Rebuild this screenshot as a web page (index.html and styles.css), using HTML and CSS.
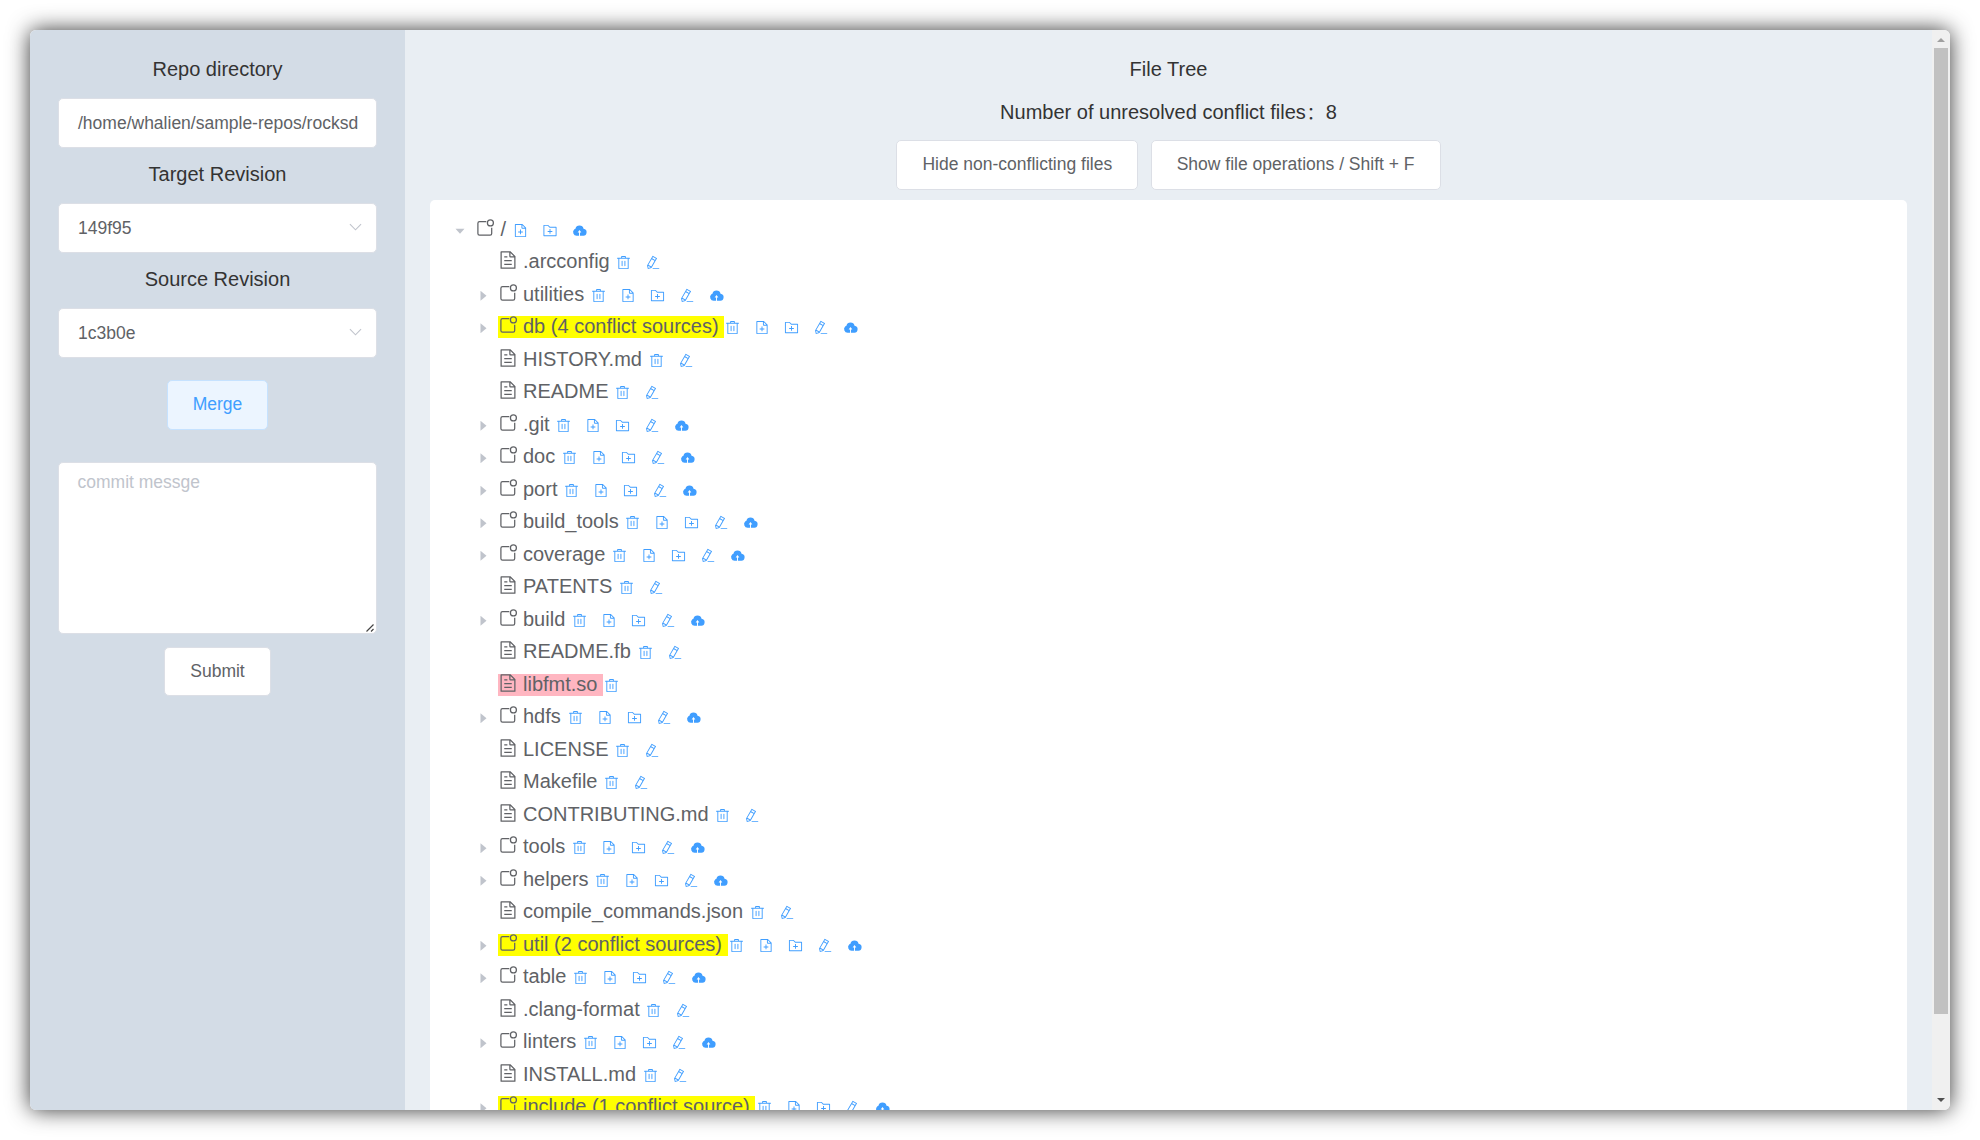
FILE: index.html
```html
<!DOCTYPE html>
<html lang="en">
<head>
<meta charset="utf-8">
<title>File Tree</title>
<link rel="stylesheet" href="styles.css">
</head>
<body>
<svg class="sprite" aria-hidden="true">
  <defs>
    <symbol id="trash" viewBox="0 0 1024 1024"><path d="M160 256H96a32 32 0 010-64h256V95.936a32 32 0 0132-32h256a32 32 0 0132 32V192h256a32 32 0 110 64h-64v672a32 32 0 01-32 32H192a32 32 0 01-32-32V256zm448-64v-64H416v64h192zM224 896h576V256H224v640zm192-128a32 32 0 01-32-32V416a32 32 0 0164 0v320a32 32 0 01-32 32zm192 0a32 32 0 01-32-32V416a32 32 0 0164 0v320a32 32 0 01-32 32z"/></symbol>
    <symbol id="doc-add" viewBox="0 0 1024 1024"><path d="M832 384H640a64 64 0 01-64-64V128H192v768h640V384zm-26.500-64L640 154.500V320h165.500zM160 64h480l256 256v608a32 32 0 01-32 32H160a32 32 0 01-32-32V96a32 32 0 0132-32zm320 512V448h64v128h128v64H544v128h-64V640H352v-64h128z"/></symbol>
    <symbol id="folder-add" viewBox="0 0 1024 1024"><path d="M128 192v640h768V320H485.760L357.504 192H128zm-32-64h287.872l128.384 128H928a32 32 0 0132 32v576a32 32 0 01-32 32H96a32 32 0 01-32-32V160a32 32 0 0132-32zm384 416V416h64v128h128v64H544v128h-64V608H352v-64h128z"/></symbol>
    <symbol id="pencil" viewBox="0 0 1024 1024"><path d="M199.040 672.640l193.984 112 224-387.968-193.920-112-224 388.032zm-23.872 60.160l32.896 148.288 144.896-45.696L175.168 732.800zM455.040 229.248l193.920 112 56.704-98.112-193.984-112-56.640 98.112zM104.320 708.800l384-665.024 304.768 175.936L409.152 884.800h.064l-248.448 78.336L104.320 708.800zm384 254.272v-64h448v64h-448z"/></symbol>
    <symbol id="cloud" viewBox="0 0 1024 1024"><path fill-rule="evenodd" d="M544 864V640h96L512 480 384 640h96v224H320A240 240 0 01150 450 140 140 0 01236 400 282 282 0 01788 400 232 232 0 01736 864z"/></symbol>
    <symbol id="doc" viewBox="0 0 1024 1024"><path d="M832 384H640a64 64 0 01-64-64V128H192v768h640V384zm-26.500-64L640 154.500V320h165.500zM160 64h480l256 256v608a32 32 0 01-32 32H160a32 32 0 01-32-32V96a32 32 0 0132-32zm160 448h384v64H320v-64zm0-192h160v64H320v-64zm0 384h384v64H320v-64z"/></symbol>
    <symbol id="dir" viewBox="0 0 20 20"><path fill="none" stroke="currentColor" stroke-width="1.250" d="M11.300 3.600H4.500A1.600 1.600 0 002.900 5.200V15.600A1.600 1.600 0 004.500 17.200H15.100A1.600 1.600 0 0016.700 15.600V9.800"/><circle cx="15.400" cy="4.900" r="3" fill="none" stroke="currentColor" stroke-width="1.250"/></symbol>
    <symbol id="ops-root" viewBox="0 0 74 15"><use href="#doc-add" width="15" height="15"/><use href="#folder-add" x="29.500" width="15" height="15"/><use href="#cloud" x="59" width="15" height="15"/></symbol>
    <symbol id="ops-file" viewBox="0 0 44.500 15"><use href="#trash" width="15" height="15"/><use href="#pencil" x="29.500" width="15" height="15"/></symbol>
    <symbol id="ops-dir" viewBox="0 0 133 15"><use href="#trash" width="15" height="15"/><use href="#doc-add" x="29.500" width="15" height="15"/><use href="#folder-add" x="59" width="15" height="15"/><use href="#pencil" x="88.500" width="15" height="15"/><use href="#cloud" x="118" width="15" height="15"/></symbol>
  </defs>
</svg>
<div class="window">
  <aside class="sidebar">
    <div class="label">Repo directory</div>
    <div class="input"><span class="input-text">/home/whalien/sample-repos/rocksd</span></div>
    <div class="label">Target Revision</div>
    <div class="input"><span class="input-text">149f95</span><svg class="chevron" viewBox="0 0 14 8"><path d="M1 1l6 6 6-6"/></svg></div>
    <div class="label">Source Revision</div>
    <div class="input"><span class="input-text">1c3b0e</span><svg class="chevron" viewBox="0 0 14 8"><path d="M1 1l6 6 6-6"/></svg></div>
    <div class="btn merge">Merge</div>
    <div class="message">commit messge<svg class="grip" viewBox="0 0 8 8"><path d="M0.500 7.500l7-7M5 7.500l2.500-2.500"/></svg></div>
    <div class="btn submit">Submit</div>
  </aside>
  <main class="main">
    <div class="title">File Tree</div>
    <div class="count">Number of unresolved conflict files<span class="colon">：</span>8</div>
    <div class="actions"><div class="btn">Hide non-conflicting files</div><div class="btn">Show file operations / Shift + F</div></div>
    <div class="tree">
      <div class="row root"><i class="caret open"></i><span class="name"><svg class="kind"><use href="#dir"/></svg>/</span><svg class="ops ops-root"><use href="#ops-root"/></svg></div>
      <div class="row"><i class="caret none"></i><span class="name"><svg class="kind"><use href="#doc"/></svg>.arcconfig</span><svg class="ops ops-file"><use href="#ops-file"/></svg></div>
      <div class="row"><i class="caret"></i><span class="name"><svg class="kind"><use href="#dir"/></svg>utilities</span><svg class="ops"><use href="#ops-dir"/></svg></div>
      <div class="row"><i class="caret"></i><span class="name conflict"><svg class="kind"><use href="#dir"/></svg>db (4 conflict sources)</span><svg class="ops"><use href="#ops-dir"/></svg></div>
      <div class="row"><i class="caret none"></i><span class="name"><svg class="kind"><use href="#doc"/></svg>HISTORY.md</span><svg class="ops ops-file"><use href="#ops-file"/></svg></div>
      <div class="row"><i class="caret none"></i><span class="name"><svg class="kind"><use href="#doc"/></svg>README</span><svg class="ops ops-file"><use href="#ops-file"/></svg></div>
      <div class="row"><i class="caret"></i><span class="name"><svg class="kind"><use href="#dir"/></svg>.git</span><svg class="ops"><use href="#ops-dir"/></svg></div>
      <div class="row"><i class="caret"></i><span class="name"><svg class="kind"><use href="#dir"/></svg>doc</span><svg class="ops"><use href="#ops-dir"/></svg></div>
      <div class="row"><i class="caret"></i><span class="name"><svg class="kind"><use href="#dir"/></svg>port</span><svg class="ops"><use href="#ops-dir"/></svg></div>
      <div class="row"><i class="caret"></i><span class="name"><svg class="kind"><use href="#dir"/></svg>build_tools</span><svg class="ops"><use href="#ops-dir"/></svg></div>
      <div class="row"><i class="caret"></i><span class="name"><svg class="kind"><use href="#dir"/></svg>coverage</span><svg class="ops"><use href="#ops-dir"/></svg></div>
      <div class="row"><i class="caret none"></i><span class="name"><svg class="kind"><use href="#doc"/></svg>PATENTS</span><svg class="ops ops-file"><use href="#ops-file"/></svg></div>
      <div class="row"><i class="caret"></i><span class="name"><svg class="kind"><use href="#dir"/></svg>build</span><svg class="ops"><use href="#ops-dir"/></svg></div>
      <div class="row"><i class="caret none"></i><span class="name"><svg class="kind"><use href="#doc"/></svg>README.fb</span><svg class="ops ops-file"><use href="#ops-file"/></svg></div>
      <div class="row"><i class="caret none"></i><span class="name binary"><svg class="kind"><use href="#doc"/></svg>libfmt.so</span><svg class="ops ops-single"><use href="#trash"/></svg></div>
      <div class="row"><i class="caret"></i><span class="name"><svg class="kind"><use href="#dir"/></svg>hdfs</span><svg class="ops"><use href="#ops-dir"/></svg></div>
      <div class="row"><i class="caret none"></i><span class="name"><svg class="kind"><use href="#doc"/></svg>LICENSE</span><svg class="ops ops-file"><use href="#ops-file"/></svg></div>
      <div class="row"><i class="caret none"></i><span class="name"><svg class="kind"><use href="#doc"/></svg>Makefile</span><svg class="ops ops-file"><use href="#ops-file"/></svg></div>
      <div class="row"><i class="caret none"></i><span class="name"><svg class="kind"><use href="#doc"/></svg>CONTRIBUTING.md</span><svg class="ops ops-file"><use href="#ops-file"/></svg></div>
      <div class="row"><i class="caret"></i><span class="name"><svg class="kind"><use href="#dir"/></svg>tools</span><svg class="ops"><use href="#ops-dir"/></svg></div>
      <div class="row"><i class="caret"></i><span class="name"><svg class="kind"><use href="#dir"/></svg>helpers</span><svg class="ops"><use href="#ops-dir"/></svg></div>
      <div class="row"><i class="caret none"></i><span class="name"><svg class="kind"><use href="#doc"/></svg>compile_commands.json</span><svg class="ops ops-file"><use href="#ops-file"/></svg></div>
      <div class="row"><i class="caret"></i><span class="name conflict"><svg class="kind"><use href="#dir"/></svg>util (2 conflict sources)</span><svg class="ops"><use href="#ops-dir"/></svg></div>
      <div class="row"><i class="caret"></i><span class="name"><svg class="kind"><use href="#dir"/></svg>table</span><svg class="ops"><use href="#ops-dir"/></svg></div>
      <div class="row"><i class="caret none"></i><span class="name"><svg class="kind"><use href="#doc"/></svg>.clang-format</span><svg class="ops ops-file"><use href="#ops-file"/></svg></div>
      <div class="row"><i class="caret"></i><span class="name"><svg class="kind"><use href="#dir"/></svg>linters</span><svg class="ops"><use href="#ops-dir"/></svg></div>
      <div class="row"><i class="caret none"></i><span class="name"><svg class="kind"><use href="#doc"/></svg>INSTALL.md</span><svg class="ops ops-file"><use href="#ops-file"/></svg></div>
      <div class="row"><i class="caret"></i><span class="name conflict"><svg class="kind"><use href="#dir"/></svg>include (1 conflict source)</span><svg class="ops"><use href="#ops-dir"/></svg></div>
    </div>
  </main>
  <div class="scrollbar"><i class="arrow up"></i><div class="track"><div class="thumb"></div></div><i class="arrow down"></i></div>
</div>
</body>
</html>
```
FILE: styles.css
```css
* { box-sizing: border-box; }
html { height: 100%; overflow: hidden; background: #fff; }
body {
  margin: 0;
  padding: 30px;
  height: 1140px;
  font-family: "Liberation Sans", Arial, "Noto Sans CJK SC", sans-serif;
  font-size: 20px;
  color: #333;
}
.sprite { position: absolute; width: 0; height: 0; }
.window {
  display: flex;
  width: 1920px;
  height: 1080px;
  overflow: hidden;
  border-radius: 6px;
  box-shadow: 0 0 22px rgba(0, 0, 0, .8);
}

.sidebar {
  flex: none;
  display: flex;
  flex-direction: column;
  align-items: center;
  width: 375px;
  padding: 13px 28px 0;
  background: #d3dce6;
}
.label { height: 55px; line-height: 52px; }
.input {
  flex: none;
  display: flex;
  align-items: center;
  justify-content: space-between;
  width: 319px;
  height: 50px;
  padding: 0 14px 0 19px;
  border: 1px solid #dcdfe6;
  border-radius: 5px;
  background: #fff;
  color: #606266;
  font-size: 17.5px;
  white-space: nowrap;
}
.input-text { line-height: 48px; }
.chevron { width: 13px; height: 8px; margin-top: -3px; fill: none; stroke: #c0c4cc; stroke-width: 1.2; }
.btn {
  flex: none;
  height: 50px;
  line-height: 46px;
  padding: 0 25px;
  border: 1px solid #dcdfe6;
  border-radius: 5px;
  background: #fff;
  color: #606266;
  font-size: 17.5px;
  white-space: nowrap;
}
.merge { margin-top: 22px; color: #409eff; background: #ecf5ff; border-color: #c6e2ff; }
.message {
  flex: none;
  position: relative;
  width: 319px;
  height: 172px;
  margin-top: 32px;
  padding: 6px 18.5px;
  border: 1px solid #dcdfe6;
  border-radius: 5px;
  background: #fff;
  color: #c0c4cc;
  font-size: 17.5px;
  line-height: 26px;
}
.grip { position: absolute; right: 2px; bottom: 1px; width: 8px; height: 8px; fill: none; stroke: #444; stroke-width: 1.2; }
.submit { margin-top: 13px; height: 49px; }

.main {
  flex: 1;
  display: flex;
  flex-direction: column;
  align-items: center;
  padding: 13px 25px 0;
  overflow: hidden;
  background: #e9eef3;
}
.title { flex: none; height: 43px; line-height: 52px; }
.count { flex: none; height: 54px; line-height: 52px; }
.colon { display: inline-block; width: 20px; padding-left: 1px; font-size: 17px; }
.actions { flex: none; display: flex; gap: 12.5px; height: 60px; }
.tree {
  flex: none;
  align-self: stretch;
  padding: 13px 0 0 24.5px;
  border-radius: 5px;
  background: #fff;
  color: #606266;
}
.row { display: flex; align-items: center; height: 32.5px; padding-left: 23px; }
.root { padding-left: 0.5px; }
.caret { flex: none; width: 20px; height: 10px; background: #c0c4cc; clip-path: polygon(3px 0, 9px 5px, 3px 10px); margin-top: 3px; }
.caret.open { clip-path: polygon(0.5px 3px, 9.5px 3px, 5px 8px); }
.caret.none { visibility: hidden; }
.name {
  display: flex;
  align-items: flex-start;
  height: 22.6px;
  line-height: 22px;
  padding-right: 5.56px;
  background: no-repeat 0 1px;
  white-space: nowrap;
}
.kind { flex: none; width: 20px; height: 20px; margin-right: 5.5px; fill: currentColor; }
.ops { flex: none; width: 133px; height: 15px; margin: 1.8px 0 0 1.2px; fill: #409eff; }
.ops-file { width: 44.5px; }
.ops-root { width: 74px; }
.ops-single { width: 15px; }
.conflict { background-image: linear-gradient(#ff0, #ff0); }
.binary { background-image: linear-gradient(#ffb6c1, #ffb6c1); }

.scrollbar { flex: none; display: flex; flex-direction: column; width: 18px; padding: 0 2px; background: #f0f0f0; }
.track { flex: 1; }
.thumb { height: 966px; background: #c1c1c1; }
.arrow { flex: none; height: 18px; background: #a0a0a0; clip-path: polygon(3px 12px, 7px 8px, 11px 12px); }
.arrow.down { background: #505050; clip-path: polygon(3px 6px, 11px 6px, 7px 10px); }
```
